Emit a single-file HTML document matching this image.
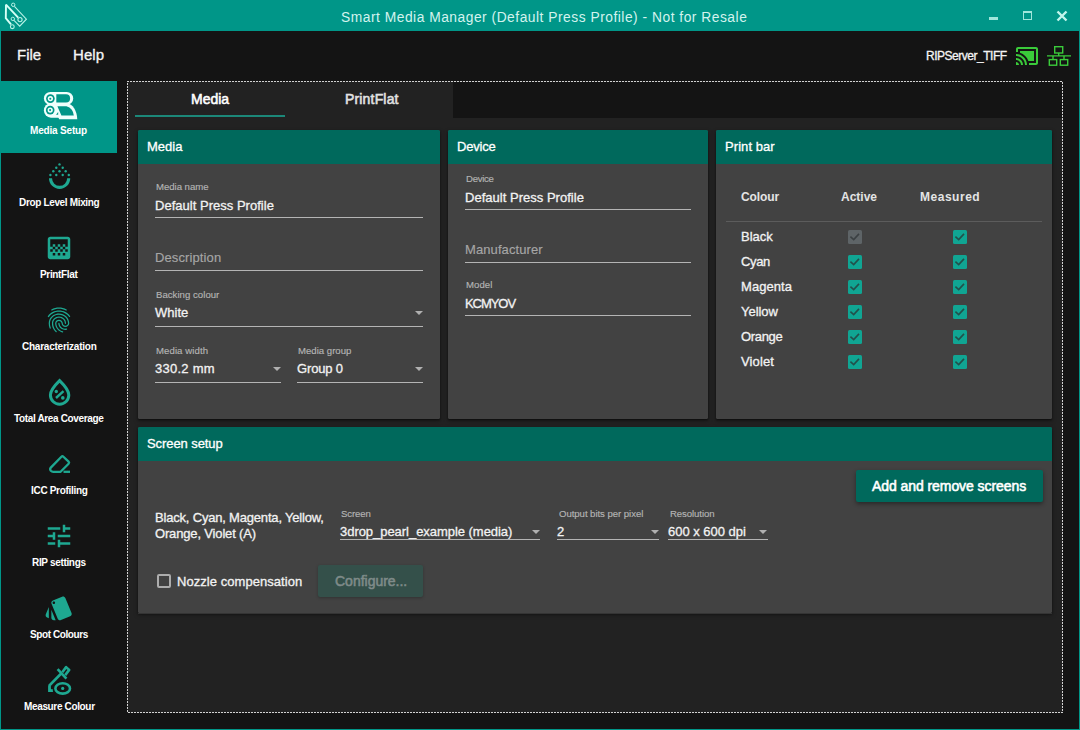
<!DOCTYPE html>
<html>
<head>
<meta charset="utf-8">
<title>Smart Media Manager</title>
<style>
*{box-sizing:border-box;margin:0;padding:0}
html,body{width:1080px;height:730px;overflow:hidden;background:#141414}
body{font-family:"Liberation Sans",sans-serif;color:#fff;position:relative}
.abs{position:absolute}
.t{position:absolute;white-space:nowrap;line-height:20px;font-size:13px;color:#f2f2f2;-webkit-text-stroke:0.3px currentColor}
.b{font-weight:bold;-webkit-text-stroke:0}
.m{-webkit-text-stroke:0.55px currentColor}
#frame{left:0;top:0;width:1080px;height:730px;background:#009688}
#inner{left:1px;top:31px;width:1078px;height:698px;background:#141414}
#titlebar{left:0;top:0;width:1080px;height:31px;background:#009688}
#sel{left:1px;top:81px;width:116px;height:72px;background:#009688}
#panel{left:127px;top:81px;width:936px;height:632px;background:#222222}
#tabdark{left:453px;top:82px;width:609px;height:36px;background:#141414}
#tabline{left:135px;top:115px;width:150px;height:2px;background:#1c8879}
.card{position:absolute;background:#424242;border-radius:1.5px;box-shadow:0 1px 2px rgba(0,0,0,.5),0 2px 5px rgba(0,0,0,.3)}
.hd{position:absolute;left:0;top:0;right:0;height:34px;background:#00695c;border-radius:1.5px 1.5px 0 0}
.ul{position:absolute;height:1px;background:#b4b4b4}
.lbl{font-size:9.6px;color:#b4b4b4;-webkit-text-stroke:0.15px currentColor}
.ph{color:#a6a6a6;-webkit-text-stroke:0.15px currentColor}
.side{font-size:10px;font-weight:bold;color:#ffffff;-webkit-text-stroke:0}
.arrow{position:absolute;width:0;height:0;border-left:4px solid transparent;border-right:4px solid transparent;border-top:4px solid #b0b0b0}
.cb{position:absolute;width:14px;height:14px;border-radius:1.5px;background:#10a593}
.cb.dis{background:#5e6467}
.ico{position:absolute}
</style>
</head>
<body>
<div id="frame" class="abs"></div>
<div id="inner" class="abs"></div>
<div id="titlebar" class="abs"></div>

<!-- TITLE -->
<span class="t" id="title" style="left:341px;top:7.5px;font-size:13.8px;color:#d3f3ee;-webkit-text-stroke:0;letter-spacing:0.51px">Smart Media Manager (Default Press Profile) - Not for Resale</span>

<!-- MENU -->
<span class="t" id="mfile" style="left:17px;top:45px;font-size:15px;color:#f5f5f5;letter-spacing:0">File</span>
<span class="t" id="mhelp" style="left:73px;top:45px;font-size:15px;color:#f5f5f5;letter-spacing:0.05px">Help</span>
<span class="t" id="rip" style="left:926px;top:46px;font-size:12px;color:#f5f5f5;letter-spacing:-0.48px">RIPServer_TIFF</span>

<!-- SIDEBAR -->
<div id="sel" class="abs"></div>
<span class="t side" id="s1" style="top:121px;left:30px;letter-spacing:-0.18px">Media Setup</span>
<span class="t side" id="s2" style="top:193px;left:19px;letter-spacing:-0.34px">Drop Level Mixing</span>
<span class="t side" id="s3" style="top:265px;left:40px;letter-spacing:-0.34px">PrintFlat</span>
<span class="t side" id="s4" style="top:337px;left:22px;letter-spacing:-0.24px">Characterization</span>
<span class="t side" id="s5" style="top:409px;left:14px;letter-spacing:-0.35px">Total Area Coverage</span>
<span class="t side" id="s6" style="top:481px;left:31px;letter-spacing:-0.31px">ICC Profiling</span>
<span class="t side" id="s7" style="top:553px;left:32px;letter-spacing:-0.33px">RIP settings</span>
<span class="t side" id="s8" style="top:625px;left:30px;letter-spacing:-0.41px">Spot Colours</span>
<span class="t side" id="s9" style="top:697px;left:24px;letter-spacing:-0.35px">Measure Colour</span>

<!-- MAIN PANEL -->
<div id="panel" class="abs"></div>
<div id="tabdark" class="abs"></div>
<div id="tabline" class="abs"></div>
<span class="t m" id="tab1" style="left:191px;top:89px;font-size:14px;color:#ffffff;letter-spacing:-0.01px">Media</span>
<span class="t m" id="tab2" style="left:345px;top:89px;font-size:14px;color:#e2e2e2;letter-spacing:0.17px">PrintFlat</span>

<!-- CARDS -->
<div class="card" id="c1" style="left:138px;top:130px;width:302px;height:289px"><div class="hd"></div></div>
<div class="card" id="c2" style="left:448px;top:130px;width:260px;height:289px"><div class="hd"></div></div>
<div class="card" id="c3" style="left:716px;top:130px;width:336px;height:289px"><div class="hd"></div></div>
<div class="card" id="c4" style="left:138px;top:427px;width:914px;height:186px"><div class="hd"></div></div>
<div class="abs" style="left:138px;top:613px;width:914px;height:1px;background:#343434"></div>


<!-- dotted focus border -->
<div class="abs" style="left:127px;top:81px;width:936px;height:1px;background:repeating-linear-gradient(90deg,#d2d2d2 0 2px,transparent 2px 3px)"></div>
<div class="abs" style="left:127px;top:712px;width:936px;height:1px;background:repeating-linear-gradient(90deg,transparent 0 1px,#d2d2d2 1px 3px)"></div>
<div class="abs" style="left:127px;top:81px;width:1px;height:632px;background:repeating-linear-gradient(180deg,#d2d2d2 0 1px,transparent 1px 2px,#d2d2d2 2px 3px)"></div>
<div class="abs" style="left:1062px;top:81px;width:1px;height:632px;background:repeating-linear-gradient(180deg,transparent 0 1px,#d2d2d2 1px 3px)"></div>

<!-- card headers text -->
<span class="t" id="h1" style="left:147px;top:137px;color:#fff;letter-spacing:0.01px">Media</span>
<span class="t" id="h2" style="left:457px;top:137px;color:#fff;letter-spacing:-0.18px">Device</span>
<span class="t" id="h3" style="left:725px;top:137px;color:#fff;letter-spacing:0.07px">Print bar</span>
<span class="t" id="h4" style="left:147px;top:434px;color:#fff;letter-spacing:-0.08px">Screen setup</span>

<!-- MEDIA CARD -->
<span class="t lbl" id="l1" style="left:156px;top:177px;letter-spacing:-0.03px">Media name</span>
<span class="t" id="v1" style="left:155px;top:196px;letter-spacing:0.02px">Default Press Profile</span>
<div class="ul" style="left:155px;top:217px;width:268px"></div>
<span class="t ph" id="v2" style="left:155px;top:248px;letter-spacing:0.11px">Description</span>
<div class="ul" style="left:155px;top:270px;width:268px"></div>
<span class="t lbl" id="l3" style="left:156px;top:285px;letter-spacing:0.03px">Backing colour</span>
<span class="t" id="v3" style="left:155px;top:303px;letter-spacing:0">White</span>
<div class="arrow" style="left:415px;top:311px"></div>
<div class="ul" style="left:155px;top:326px;width:268px"></div>
<span class="t lbl" id="l4" style="left:156px;top:341px;letter-spacing:0.08px">Media width</span>
<span class="t" id="v4" style="left:155px;top:359px;letter-spacing:0.26px">330.2 mm</span>
<div class="arrow" style="left:273px;top:367px"></div>
<div class="ul" style="left:155px;top:382px;width:126px"></div>
<span class="t lbl" id="l5" style="left:298px;top:341px;letter-spacing:0">Media group</span>
<span class="t" id="v5" style="left:297px;top:359px;letter-spacing:-0.15px">Group 0</span>
<div class="arrow" style="left:415px;top:367px"></div>
<div class="ul" style="left:297px;top:382px;width:126px"></div>

<!-- DEVICE CARD -->
<span class="t lbl" id="l6" style="left:466px;top:169px;letter-spacing:-0.3px">Device</span>
<span class="t" id="v6" style="left:465px;top:188px;letter-spacing:0.02px">Default Press Profile</span>
<div class="ul" style="left:465px;top:209px;width:226px"></div>
<span class="t ph" id="v7" style="left:465px;top:240px;letter-spacing:0.09px">Manufacturer</span>
<div class="ul" style="left:465px;top:262px;width:226px"></div>
<span class="t lbl" id="l8" style="left:466px;top:275px;letter-spacing:0.07px">Model</span>
<span class="t" id="v8" style="left:465px;top:294px;letter-spacing:-1.05px">KCMYOV</span>
<div class="ul" style="left:465px;top:315px;width:226px"></div>

<!-- PRINT BAR CARD -->
<span class="t b" id="p1" style="left:741px;top:187px;font-size:12px;color:#e4e4e4;letter-spacing:-0.09px">Colour</span>
<span class="t b" id="p2" style="left:841px;top:187px;font-size:12px;color:#e4e4e4">Active</span>
<span class="t b" id="p3" style="left:920px;top:187px;font-size:12px;color:#e4e4e4;letter-spacing:0.52px">Measured</span>
<div class="abs" style="left:726px;top:221px;width:316px;height:1px;background:#5c5c5c"></div>
<span class="t" id="r1" style="left:741px;top:227px;letter-spacing:0.01px">Black</span>
<span class="t" id="r2" style="left:741px;top:252px;letter-spacing:-0.36px">Cyan</span>
<span class="t" id="r3" style="left:741px;top:277px;letter-spacing:0.06px">Magenta</span>
<span class="t" id="r4" style="left:741px;top:302px;letter-spacing:-0.03px">Yellow</span>
<span class="t" id="r5" style="left:741px;top:327px;letter-spacing:-0.33px">Orange</span>
<span class="t" id="r6" style="left:741px;top:352px;letter-spacing:0.12px">Violet</span>
<div class="cb dis" style="left:848px;top:230px"></div><svg class="abs" style="left:848px;top:230px" width="14" height="14" viewBox="0 0 14 14"><path d="M2.4 6.6L5.7 9.6L11 3.9" fill="none" stroke="#3b4043" stroke-width="1.6"/></svg>
<div class="cb" style="left:953px;top:230px"></div><svg class="abs" style="left:953px;top:230px" width="14" height="14" viewBox="0 0 14 14"><path d="M2.4 6.6L5.7 9.6L11 3.9" fill="none" stroke="#22504b" stroke-width="1.6"/></svg>
<div class="cb" style="left:848px;top:255px"></div><svg class="abs" style="left:848px;top:255px" width="14" height="14" viewBox="0 0 14 14"><path d="M2.4 6.6L5.7 9.6L11 3.9" fill="none" stroke="#22504b" stroke-width="1.6"/></svg>
<div class="cb" style="left:953px;top:255px"></div><svg class="abs" style="left:953px;top:255px" width="14" height="14" viewBox="0 0 14 14"><path d="M2.4 6.6L5.7 9.6L11 3.9" fill="none" stroke="#22504b" stroke-width="1.6"/></svg>
<div class="cb" style="left:848px;top:280px"></div><svg class="abs" style="left:848px;top:280px" width="14" height="14" viewBox="0 0 14 14"><path d="M2.4 6.6L5.7 9.6L11 3.9" fill="none" stroke="#22504b" stroke-width="1.6"/></svg>
<div class="cb" style="left:953px;top:280px"></div><svg class="abs" style="left:953px;top:280px" width="14" height="14" viewBox="0 0 14 14"><path d="M2.4 6.6L5.7 9.6L11 3.9" fill="none" stroke="#22504b" stroke-width="1.6"/></svg>
<div class="cb" style="left:848px;top:305px"></div><svg class="abs" style="left:848px;top:305px" width="14" height="14" viewBox="0 0 14 14"><path d="M2.4 6.6L5.7 9.6L11 3.9" fill="none" stroke="#22504b" stroke-width="1.6"/></svg>
<div class="cb" style="left:953px;top:305px"></div><svg class="abs" style="left:953px;top:305px" width="14" height="14" viewBox="0 0 14 14"><path d="M2.4 6.6L5.7 9.6L11 3.9" fill="none" stroke="#22504b" stroke-width="1.6"/></svg>
<div class="cb" style="left:848px;top:330px"></div><svg class="abs" style="left:848px;top:330px" width="14" height="14" viewBox="0 0 14 14"><path d="M2.4 6.6L5.7 9.6L11 3.9" fill="none" stroke="#22504b" stroke-width="1.6"/></svg>
<div class="cb" style="left:953px;top:330px"></div><svg class="abs" style="left:953px;top:330px" width="14" height="14" viewBox="0 0 14 14"><path d="M2.4 6.6L5.7 9.6L11 3.9" fill="none" stroke="#22504b" stroke-width="1.6"/></svg>
<div class="cb" style="left:848px;top:355px"></div><svg class="abs" style="left:848px;top:355px" width="14" height="14" viewBox="0 0 14 14"><path d="M2.4 6.6L5.7 9.6L11 3.9" fill="none" stroke="#22504b" stroke-width="1.6"/></svg>
<div class="cb" style="left:953px;top:355px"></div><svg class="abs" style="left:953px;top:355px" width="14" height="14" viewBox="0 0 14 14"><path d="M2.4 6.6L5.7 9.6L11 3.9" fill="none" stroke="#22504b" stroke-width="1.6"/></svg>


<!-- SCREEN SETUP CARD -->
<div class="abs" id="btn1" style="left:856px;top:470px;width:187px;height:32px;background:#00695c;border-radius:2px;box-shadow:0 2px 4px rgba(0,0,0,.4)"></div>
<span class="t m" id="bt1" style="left:872px;top:476px;font-size:14px;color:#fff;letter-spacing:-0.07px">Add and remove screens</span>
<span class="t" id="sc1" style="left:155px;top:508px;letter-spacing:-0.19px">Black, Cyan, Magenta, Yellow,</span>
<span class="t" id="sc2" style="left:155px;top:524px;letter-spacing:-0.16px">Orange, Violet (A)</span>
<span class="t lbl" id="l9" style="left:341px;top:504px;letter-spacing:-0.12px">Screen</span>
<span class="t" id="v9" style="left:340px;top:522px;letter-spacing:-0.04px">3drop_pearl_example (media)</span>
<div class="arrow" style="left:532px;top:530px"></div>
<div class="ul" style="left:340px;top:539px;width:200px"></div>
<span class="t lbl" id="l10" style="left:559px;top:504px;letter-spacing:-0.05px">Output bits per pixel</span>
<span class="t" id="v10" style="left:557px;top:522px">2</span>
<div class="arrow" style="left:651px;top:530px"></div>
<div class="ul" style="left:557px;top:539px;width:102px"></div>
<span class="t lbl" id="l11" style="left:670px;top:504px;letter-spacing:-0.09px">Resolution</span>
<span class="t" id="v11" style="left:668px;top:522px;letter-spacing:-0.01px">600 x 600 dpi</span>
<div class="arrow" style="left:759px;top:530px"></div>
<div class="ul" style="left:668px;top:539px;width:100px"></div>
<div class="abs" id="ncb" style="left:157px;top:574px;width:14px;height:14px;border:2px solid #adadad;border-radius:2px"></div>
<span class="t" id="nz" style="left:177px;top:572px;letter-spacing:0.05px">Nozzle compensation</span>
<div class="abs" id="btn2" style="left:318px;top:565px;width:105px;height:32px;background:#34504a;border-radius:2px;box-shadow:0 1px 3px rgba(0,0,0,.25)"></div>
<span class="t m" id="bt2" style="left:335px;top:571px;font-size:14px;color:#7f8b89;letter-spacing:-0.01px">Configure...</span>


<!-- title logo -->
<svg class="ico" style="left:0;top:0" width="40" height="31" viewBox="0 0 40 31" fill="none" stroke="#d6fff6">
<path d="M6 4.6L5.8 18.2L11 24.4" stroke-width="1.9" stroke-linejoin="miter"/>
<path d="M6 4.6L18.2 17.6" stroke-width="1.9"/>
<path d="M14.4 6.3L26.4 19.2L19.7 26.2L14 20.4" stroke-width="1.1" stroke="#b9f3e8"/>
<circle cx="13.2" cy="4.8" r="1.7" stroke-width="1" stroke="#b9f3e8"/>
<circle cx="20" cy="19.6" r="2.1" stroke-width="1.1" stroke="#b9f3e8"/>
<circle cx="12.8" cy="18.9" r="1.7" stroke-width="1" stroke="#b9f3e8"/>
<circle cx="12.3" cy="26.7" r="1.9" stroke-width="1.1" stroke="#b9f3e8"/>
</svg>
<!-- window controls -->
<div class="abs" style="left:989px;top:17px;width:9px;height:3px;background:#9fe6db"></div>
<div class="abs" style="left:1023px;top:11px;width:9px;height:9px;border:1px solid #9fe6db;border-top-width:2px"></div>
<svg class="ico" style="left:1055px;top:9px" width="14" height="14" viewBox="0 0 14 14"><path d="M2.5 2.5L11.5 11.5M11.5 2.5L2.5 11.5" stroke="#c2f5ec" stroke-width="2.4" fill="none"/></svg>
<!-- cast icon -->
<svg class="ico" style="left:1015px;top:44px" width="24" height="24" viewBox="0 0 24 24"><path fill="#3acb3a" d="M1 18v3h3c0-1.66-1.34-3-3-3zm0-4v2c2.76 0 5 2.24 5 5h2c0-3.87-3.13-7-7-7zm18-7H5v1.63c3.96 1.28 7.09 4.41 8.37 8.37H19V7zM1 10v2c4.97 0 9 4.03 9 9h2c0-6.080-4.930-11-11-11zm20-7H3c-1.100 0-2 .9-2 2v3h2V5h18v14h-7v2h7c1.100 0 2-.9 2-2V5c0-1.100-.9-2-2-2z"/></svg>
<!-- network icon -->
<svg class="ico" style="left:1044px;top:42px" width="30" height="28" viewBox="1044 42 30 28" fill="none" stroke="#3acb3a" stroke-width="1.4">
<rect x="1054.7" y="46.7" width="8" height="6.3"/>
<rect x="1049.3" y="59.6" width="7.4" height="5.6"/>
<rect x="1060.3" y="59.6" width="7.4" height="5.6"/>
<path d="M1047 55.9H1071M1058.7 53V55.9M1053 55.9V59.6M1064 55.9V59.6"/>
</svg>


<!-- 1 media setup -->
<svg class="ico" style="left:38px;top:86px" width="46" height="38" viewBox="38 86 46 38" stroke="none">
<g fill="#effffc">
<rect x="43.9" y="91.9" width="29.3" height="13" rx="6.5"/>
<path d="M50.900 103.200H60V117.700H50.900a7 7.250 0 0 1 0-14.500Z"/>
<path d="M54 103H66.500Q76.400 105.200 77.300 119.300H59.200L56 112Z"/>
</g>
<g fill="#009688">
<circle cx="50.4" cy="98.6" r="4.300"/>
<circle cx="50.2" cy="110.100" r="4.300"/>
<path d="M56.300 94.300H66a4.100 4.100 0 0 1 0 8.200H56.300Z"/>
<path d="M57.400 106.300H66.500Q73 108 73.800 115.600H61.400Z"/>
<path d="M58.200 112L58.200 114.700H56Z"/>
</g>
<g fill="#effffc"><circle cx="50.4" cy="98.600" r="2.600"/><circle cx="50.2" cy="110.100" r="2.600"/></g>
<g fill="#009688"><circle cx="50.300" cy="98.700" r="1.050"/><circle cx="50.100" cy="110.100" r="1.050"/></g>
</svg>
<!-- 2 drop level mixing -->
<svg class="ico" style="left:40px;top:158px" width="40" height="36" viewBox="40 158 40 36" fill="#1ea891" stroke="none">
<circle cx="59.5" cy="164.4" r="1.2"/>
<circle cx="56.3" cy="167.7" r="1.2"/><circle cx="62.7" cy="167.7" r="1.2"/>
<circle cx="53.3" cy="171.2" r="1.2"/><circle cx="59.5" cy="171.2" r="1.2"/><circle cx="65.7" cy="171.2" r="1.2"/>
<circle cx="50.4" cy="175" r="1.2"/><circle cx="56.3" cy="175" r="1.2"/><circle cx="62.7" cy="175" r="1.2"/><circle cx="68.8" cy="175" r="1.2"/>
<path d="M50.5 178.3a9.1 9.1 0 0 0 18.2 0" fill="none" stroke="#1ea891" stroke-width="3.1"/>
</svg>
<!-- 3 printflat : gradient -->
<svg class="ico" style="left:44px;top:233px" width="30" height="30" viewBox="0 0 24 24"><path fill="#1ea891" d="M11 9h2v2h-2zm-2 2h2v2H9zm4 0h2v2h-2zm2-2h2v2h-2zM7 9h2v2H7zm12-6H5c-1.1 0-2 .9-2 2v14c0 1.1.9 2 2 2h14c1.1 0 2-.9 2-2V5c0-1.1-.9-2-2-2zM9 18H7v-2h2v2zm4 0h-2v-2h2v2zm4 0h-2v-2h2v2zm2-7h-2v2h2v2h-2v-2h-2v2h-2v-2h-2v2H9v-2H7v2H5v-2h2v-2H5V5h14v6z"/></svg>
<!-- 4 characterization : fingerprint -->
<svg class="ico" style="left:44px;top:305px" width="30" height="30" viewBox="0 0 24 24"><path fill="#1ea891" d="M17.81 4.47c-.08 0-.16-.02-.23-.06C15.66 3.42 14 3 12.01 3c-1.98 0-3.86.47-5.57 1.41-.24.13-.54.04-.68-.2-.13-.24-.04-.55.2-.68C7.820 2.520 9.860 2 12.010 2c2.130 0 3.990.47 6.030 1.520.25.13.34.43.21.67-.09.18-.26.28-.44.28zM3.500 9.720c-.1 0-.2-.03-.29-.09-.23-.16-.28-.47-.12-.7.99-1.400 2.250-2.500 3.750-3.270C9.980 4.040 14 4.030 17.150 5.650c1.500.77 2.760 1.860 3.750 3.250.16.22.11.54-.12.7-.23.16-.54.11-.7-.12-.9-1.260-2.040-2.250-3.390-2.940-2.870-1.470-6.540-1.470-9.400.01-1.360.7-2.500 1.700-3.400 2.960-.08.14-.23.21-.39.21zm6.250 12.070c-.13 0-.26-.05-.35-.15-.87-.87-1.340-1.430-2.010-2.640-.69-1.230-1.050-2.730-1.050-4.340 0-2.970 2.540-5.390 5.660-5.390s5.660 2.420 5.660 5.390c0 .28-.22.5-.5.5s-.5-.22-.5-.5c0-2.420-2.090-4.390-4.660-4.390-2.570 0-4.660 1.970-4.660 4.390 0 1.440.32 2.770.93 3.850.64 1.150 1.080 1.640 1.850 2.420.19.2.19.51 0 .71-.11.1-.24.15-.37.15zm7.170-1.850c-1.190 0-2.240-.3-3.100-.89-1.490-1.010-2.380-2.650-2.380-4.390 0-.28.22-.5.5-.5s.5.22.5.5c0 1.410.72 2.740 1.940 3.560.71.48 1.540.71 2.540.71.240 0 .64-.03 1.040-.1.27-.05.53.13.58.41.05.27-.13.53-.41.58-.57.11-1.070.12-1.210.12zM14.910 22c-.04 0-.09-.01-.13-.02-1.590-.44-2.630-1.030-3.720-2.100-1.400-1.390-2.170-3.240-2.170-5.220 0-1.620 1.380-2.940 3.080-2.940 1.700 0 3.080 1.320 3.080 2.940 0 1.070.93 1.940 2.080 1.940s2.080-.87 2.080-1.940c0-3.770-3.250-6.830-7.250-6.830-2.840 0-5.440 1.580-6.610 4.030-.39.81-.59 1.760-.59 2.800 0 .78.07 2.010.67 3.610.1.260-.03.55-.29.64-.26.1-.55-.04-.64-.29-.49-1.310-.73-2.610-.73-3.960 0-1.200.23-2.290.68-3.240 1.330-2.790 4.280-4.600 7.510-4.600 4.550 0 8.250 3.510 8.250 7.830 0 1.620-1.380 2.940-3.080 2.940s-3.080-1.320-3.080-2.940c0-1.070-.93-1.940-2.080-1.940s-2.080.87-2.080 1.940c0 1.710.66 3.310 1.870 4.510.95.94 1.860 1.460 3.270 1.850.27.07.42.35.35.61-.05.23-.26.38-.47.38z"/></svg>
<!-- 5 total area coverage -->
<svg class="ico" style="left:40px;top:374px" width="40" height="36" viewBox="40 374 40 36" fill="none" stroke="#1ea891">
<path d="M59.6 380.6C59.6 380.6 50.4 389.6 50.4 395a9.2 9.2 0 0 0 18.4 0C68.8 389.600 59.6 380.6 59.6 380.6z" stroke-width="3" stroke-linejoin="miter"/>
<path d="M56 398L63.500 391.200" stroke-width="2.4"/>
<circle cx="56.3" cy="391.500" r="1.700" fill="#1ea891" stroke="none"/><circle cx="62.8" cy="397.900" r="1.800" fill="#1ea891" stroke="none"/>
</svg>
<!-- 6 icc profiling : eraser -->
<svg class="ico" style="left:40px;top:446px" width="40" height="36" viewBox="40 446 40 36" fill="none" stroke="#1ea891" stroke-width="2.3" stroke-linejoin="round">
<path d="M61.4 456.700Q62.4 455.700 63.400 456.700L68.600 461.700Q69.600 462.700 68.600 463.700L60.600 471.800H53.200Q51.800 471.800 50.800 470.800Q49.500 469.200 50.800 467.600Z"/>
<path d="M63.500 471.800H70" stroke-linecap="butt"/>
</svg>
<!-- 7 rip settings : tune -->
<svg class="ico" style="left:44px;top:521px" width="30" height="30" viewBox="0 0 24 24"><path fill="#1ea891" d="M3 17v2h6v-2H3zM3 5v2h10V5H3zm10 16v-2h8v-2h-8v-2h-2v6h2zM7 9v2H3v2h4v2h2V9H7zm14 4v-2H11v2h10zm-6-4h2V7h4V5h-4V3h-2v6z"/></svg>
<!-- 8 spot colours : style -->
<svg class="ico" style="left:44px;top:593px" width="30" height="30" viewBox="0 0 24 24"><path fill="#1ea891" d="M2.53 19.65l1.340.56v-9.030l-2.430 5.860c-.41 1.020.08 2.190 1.090 2.610zm19.500-3.700L17.070 3.980c-.31-.75-1.040-1.210-1.810-1.230-.26 0-.53.04-.79.150L7.100 5.950c-.75.31-1.210 1.030-1.230 1.800-.01.27.04.54.15.8l4.960 11.970c.31.76 1.050 1.220 1.830 1.230.26 0 .52-.05.77-.15l7.360-3.050c1.020-.42 1.510-1.590 1.090-2.600zM7.880 8.750c-.55 0-1-.45-1-1s.45-1 1-1 1 .45 1 1-.45 1-1 1zm-2 11c0 1.100.9 2 2 2h1.450l-3.450-8.340v6.340z"/></svg>
<!-- 9 measure colour -->
<svg class="ico" style="left:40px;top:660px" width="40" height="38" viewBox="40 660 40 38" fill="none" stroke="#1ea891" stroke-width="2.6">
<ellipse cx="62.7" cy="688.4" rx="7.300" ry="5.200"/>
<circle cx="62.7" cy="688.400" r="1.600" fill="#1ea891" stroke="none"/>
<path d="M57.6 669.100L66.400 678.700" />
<path d="M61.7 673L49.600 685.400V690.600H52.800" stroke-linejoin="miter"/>
<path d="M48.3 685.500V691.900H53.200Z" fill="#1ea891" stroke="none"/>
<path d="M62.300 672.200L66.100 667.100L69.200 669.900L65.200 675.100" stroke-width="2.600" stroke-linejoin="round"/>
</svg>

</body>
</html>
